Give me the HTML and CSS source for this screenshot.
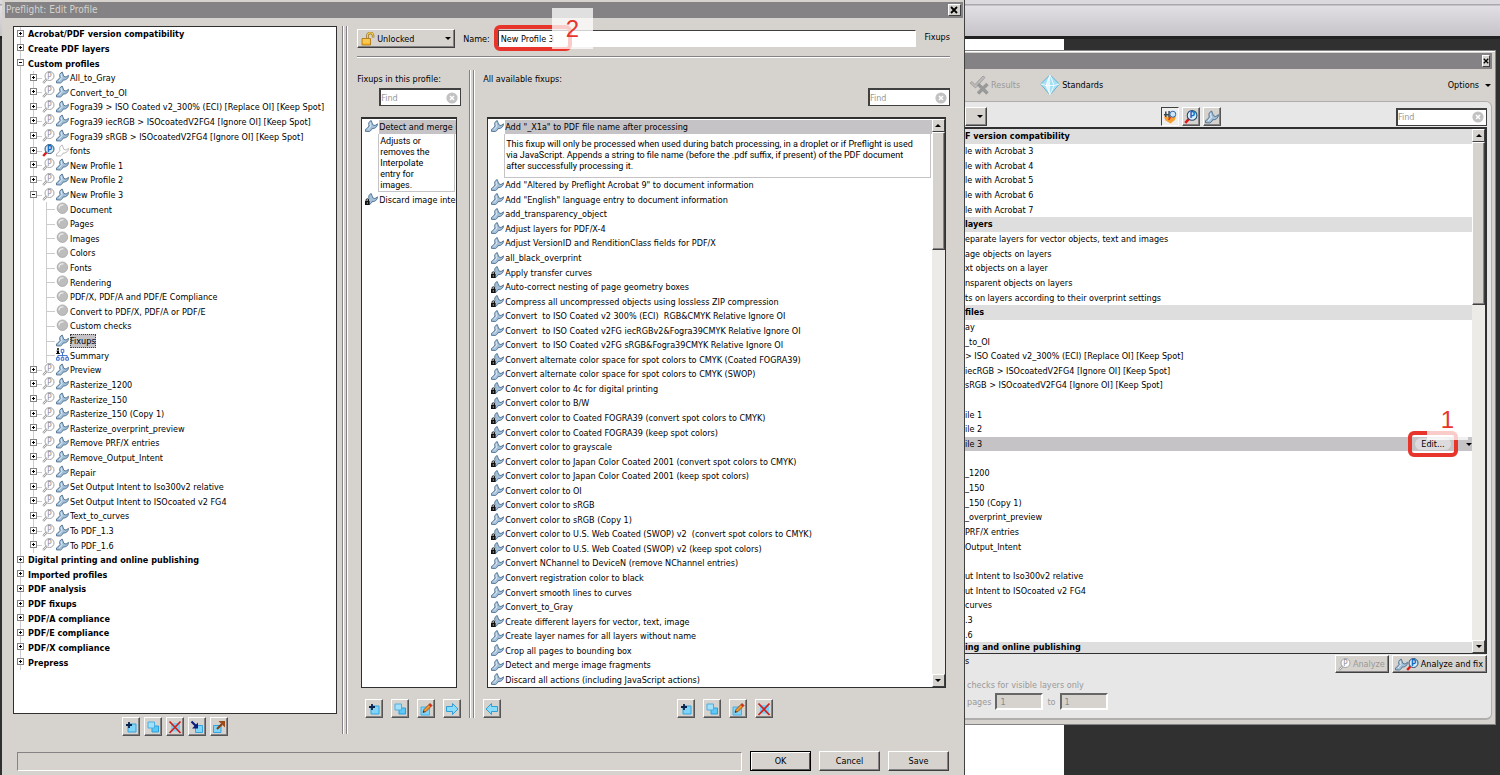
FILE: index.html
```
<!DOCTYPE html>
<html lang="en">

<head>
    <meta charset="utf-8">
    <title>Preflight: Edit Profile</title>
    <link rel="stylesheet" href="styles.css">
</head>

<body>
    <!-- Icon set -->
    <svg class="sprite" aria-hidden="true">
        <symbol id="wrench" viewBox="0 0 13 12">
            <path d="M6.200.5C3.600 1.500 3.200 4 4 6L1.800 8.600.5 9.400v2l4 .1 2.100-1.700.4-1.200c3 .2 5.500-1.600 5.500-4.800L10 5.600 7.800 4.800 7 2.600z" fill="#a3c0d8" stroke="#4f7190" stroke-width=".9" />
            <path d="M5.200 2.600c-.2 1.400.2 2.600.8 3.400L3 9.600" fill="none" stroke="#dcebf6" />
        </symbol>
        <symbol id="wrench-off" viewBox="0 0 13 12">
            <path d="M6.200.5C3.600 1.500 3.200 4 4 6L1.800 8.600.5 9.400v2l4 .1 2.100-1.700.4-1.200c3 .2 5.500-1.600 5.500-4.800L10 5.600 7.800 4.800 7 2.600z" fill="#fff" stroke="#aaa" stroke-width=".8" />
        </symbol>
        <symbol id="wrench-lock" viewBox="0 0 13 12">
            <path d="M6.200.5C3.600 1.500 3.200 4 4 6L1.800 8.600.5 9.400v2l4 .1 2.100-1.700.4-1.200c3 .2 5.500-1.600 5.500-4.800L10 5.600 7.800 4.800 7 2.600z" fill="#a3c0d8" stroke="#4f7190" stroke-width=".9" />
            <path d="M0 8h4.600v4H0z" fill="#111" />
            <path d="M1.100 8V7a1.200 1.200 0 0 1 2.400 0v1" fill="none" stroke="#111" />
            <path d="M1.800 9.500h1v1h-1z" fill="#fff" />
        </symbol>
        <symbol id="mag-off" viewBox="0 0 13 13">
            <path d="M4.800 8 1.200 12" stroke="#999" stroke-width="2.200" />
            <path d="M4.600 8.200 1.400 11.800" stroke="#f2f2f2" stroke-width=".9" />
            <circle cx="7.500" cy="5" r="4.500" fill="#fff" stroke="#999" stroke-width=".9" />
            <text x="5.200" y="7.800" class="mag-p" fill="#8c8c8c">P</text>
        </symbol>
        <symbol id="mag" viewBox="0 0 13 13">
            <path d="M4.800 8 1.200 12" stroke="#e01818" stroke-width="2.400" />
            <circle cx="7.500" cy="5" r="4.500" fill="#d8ecfa" stroke="#27496b" />
            <text x="5" y="7.800" class="mag-p mag-bold" fill="#0a6cc4">P</text>
        </symbol>
        <symbol id="dot" viewBox="0 0 13 13">
            <circle cx="6.400" cy="6.200" r="5.300" fill="#bdbdbd" stroke="#999" stroke-width=".6" />
            <path d="M3 6.500A3.400 3.400 0 0 1 7.500 3" fill="none" stroke="#eee" stroke-width="1.200" />
        </symbol>
        <symbol id="summary" viewBox="0 0 13 13">
            <path d="M1 .2h2v1.600H1zM.6 2.600H3V5h.8v1H.2V5H1V3.600H.6z" fill="#000" />
            <path d="M6.500 5v3.600M1.800 10V7.600h9.400V10" fill="none" stroke="#3a6cc8" />
            <path d="M5.200 1.400h2.600v3H5.200zM.6 9.600h2.600v2.600H.6zM5.200 9.600h2.600v2.600H5.200zM9.800 9.600h2.600v2.600H9.800z" fill="#fff" stroke="#3a6cc8" />
        </symbol>
        <symbol id="add" viewBox="0 0 14 14">
            <path d="M4 4h8v8H4z" fill="#7fd4f8" stroke="#35a4dc" />
            <path d="M5 2v6M2 5h6" stroke="#0a2450" stroke-width="1.800" />
        </symbol>
        <symbol id="copy" viewBox="0 0 14 14">
            <path d="M6 6h6.500v6H6z" fill="#5cc8f8" stroke="#2b9fda" />
            <path d="M2 2h6.500v6H2z" fill="#a5e0fb" stroke="#48b0e4" />
        </symbol>
        <symbol id="delete" viewBox="0 0 14 14">
            <path d="M3 3h9v8.500H3z" fill="#79d0f7" />
            <path d="M1.500 1.500 12.500 13M12.500 1.500 1.500 13" stroke="#d3201c" stroke-width="1.800" />
        </symbol>
        <symbol id="import" viewBox="0 0 14 14">
            <path d="M5.500 5.500h7v7h-7z" fill="#7fd4f8" stroke="#35a4dc" />
            <path d="M1.500 1.500 6 6" stroke="#101c7c" stroke-width="2.200" />
            <path d="M8 2.500V8.500H2z" fill="#101c7c" />
        </symbol>
        <symbol id="export" viewBox="0 0 14 14">
            <path d="M1.500 5.500h7.500v7H1.500z" fill="#7fd4f8" stroke="#35a4dc" />
            <path d="M5 9 10 4" stroke="#8a3e10" stroke-width="2.200" />
            <path d="M6.500 1H13v6.500z" fill="#9c4a18" />
        </symbol>
        <symbol id="pencil" viewBox="0 0 14 14">
            <path d="M2 5h8.500v8H2z" fill="#7fd4f8" stroke="#45b2e6" />
            <path d="M4 10.500 5 7.500l6-6 2 2-6 6z" fill="#f29a2a" stroke="#8a3a12" stroke-width=".8" />
            <path d="m11 1.500 2 2-1.400 1.400-2-2z" fill="#d4281c" />
            <path d="m4 10.500.6-1.800L5.800 9.900z" fill="#222" />
        </symbol>
        <symbol id="arrow-right" viewBox="0 0 14 14">
            <path d="M1.500 4.500h6v-3L13 7l-5.500 5.500v-3h-6z" fill="#8bdcfb" stroke="#2f9ed8" />
        </symbol>
        <symbol id="arrow-left" viewBox="0 0 14 14">
            <path d="M12.500 4.500h-6v-3L1 7l5.500 5.500v-3h6z" fill="#8bdcfb" stroke="#2f9ed8" />
        </symbol>
        <symbol id="clear" viewBox="0 0 12 12">
            <circle cx="6" cy="6" r="5.600" fill="#c2c2c2" />
            <path d="m4 4 4 4M8 4 4 8" stroke="#fff" stroke-width="1.500" />
        </symbol>
        <symbol id="cross" viewBox="0 0 8 8">
            <path d="m1 1 6 6M7 1 1 7" stroke="#000" stroke-width="1.800" />
        </symbol>
        <symbol id="padlock" viewBox="0 0 14 14">
            <path d="M6.500 6.500V4a2.700 2.700 0 0 1 5.600-.5V5.500" fill="none" stroke="#8a6410" stroke-width="2.400" />
            <path d="M6.500 6.500V4a2.700 2.700 0 0 1 5.600-.5V5.500" fill="none" stroke="#f3cf58" stroke-width="1.200" />
            <path d="M1 6.500h8.500v6.500H1z" fill="#f7b92c" stroke="#a8700c" stroke-width=".8" />
            <path d="M1.800 8h7M1.800 10h7" stroke="#fbe08a" stroke-width=".8" />
        </symbol>
        <symbol id="results" viewBox="0 0 20 20">
            <path d="m1 8 2-1.500L6 9.500 14 1l2 1.500L6.500 13z" fill="#bbb" stroke="#999" stroke-width=".8" />
            <path d="m9 9 9.500 9.500M18.500 9 9 18.500" stroke="#999" stroke-width="3.400" />
        </symbol>
        <symbol id="gem" viewBox="0 0 20 22">
            <path d="M10 .8 19.400 10 10 21 .6 10z" fill="#a6e0f5" stroke="#5aa6c8" stroke-width=".8" />
            <path d="M10 .8 6 11l4 10z" fill="#e0f6fe" />
            <path d="M.6 10 6 11.500 14 11.500 19.400 10M10 .8 6 11.500 10 21 14 11.500z" fill="none" stroke="#fff" stroke-width=".8" />
        </symbol>
        <symbol id="show-all" viewBox="0 0 15 15">
            <path d="M1 7h13l-1.500 4L8 14.500 2.500 11z" fill="#f6a030" />
            <path d="M3 1.500v6M6.500 1v7M1 5h6" stroke="#3c4650" stroke-width="1.600" />
            <circle cx="10.500" cy="4.500" r="3.200" fill="#cfe6f8" stroke="#27609c" />
            <path d="m8 7.500-2 3" stroke="#e02818" stroke-width="1.600" />
        </symbol>
    </svg>

    <div class="desktop">
        <div class="app-toolbar"></div>
        <div class="document"></div>

        <!-- Preflight window, behind -->
        <section class="preflight">
            <header class="titlebar titlebar-back">
                <button class="close" aria-label="Close Preflight"><svg><use href="#cross" /></svg></button>
            </header>
            <div class="tabs">
                <button class="tab disabled" disabled><svg class="results"><use href="#results" /></svg>Results</button>
                <button class="tab"><svg class="gem"><use href="#gem" /></svg>Standards</button>
                <button class="options">Options <i class="caret"></i></button>
            </div>
            <div class="panel">
                <div class="filter-bar">
                    <div class="select library"><select aria-label="Library"></select><i class="caret"></i></div>
                    <div class="filters">
                        <button class="tool pressed" aria-label="Show all"><svg><use href="#show-all" /></svg></button>
                        <button class="tool" aria-label="Show checks"><svg><use href="#mag" /></svg></button>
                        <button class="tool" aria-label="Show fixups"><svg><use href="#wrench" /></svg></button>
                    </div>
                    <div class="find find-wide">
                        <input type="text" placeholder="Find" aria-label="Find profile">
                        <svg><use href="#clear" /></svg>
                    </div>
                </div>

                <div class="listbox profiles">
                    <ul class="rows">
                        <li class="group">F version compatibility</li>
                        <li>le with Acrobat 3</li>
                        <li>le with Acrobat 4</li>
                        <li>le with Acrobat 5</li>
                        <li>le with Acrobat 6</li>
                        <li>le with Acrobat 7</li>
                        <li class="group">layers</li>
                        <li>eparate layers for vector objects, text and images</li>
                        <li>age objects on layers</li>
                        <li>xt objects on a layer</li>
                        <li>nsparent objects on layers</li>
                        <li>ts on layers according to their overprint settings</li>
                        <li class="group">files</li>
                        <li>ay</li>
                        <li>_to_OI</li>
                        <li>&gt; ISO Coated v2_300% (ECI) [Replace OI] [Keep Spot]</li>
                        <li>iecRGB &gt; ISOcoatedV2FG4 [Ignore OI] [Keep Spot]</li>
                        <li>sRGB &gt; ISOcoatedV2FG4 [Ignore OI] [Keep Spot]</li>
                        <li></li>
                        <li>ile 1</li>
                        <li>ile 2</li>
                        <li class="selected">
                            ile 3
                            <span class="edit-wrap">
                                <button class="edit">Edit...</button>
                                <span class="mark mark-edit"></span>
                                <span class="step step-edit">1</span>
                            </span>
                            <i class="caret"></i>
                        </li>
                        <li></li>
                        <li>_1200</li>
                        <li>_150</li>
                        <li>_150 (Copy 1)</li>
                        <li>_overprint_preview</li>
                        <li>PRF/X entries</li>
                        <li>Output_Intent</li>
                        <li></li>
                        <li>ut Intent to Iso300v2 relative</li>
                        <li>ut Intent to ISOcoated v2 FG4</li>
                        <li>curves</li>
                        <li>.3</li>
                        <li>.6</li>
                        <li class="group cut">ing and online publishing</li>
                    </ul>
                    <div class="scrollbar">
                        <button class="arrow up" aria-label="Scroll up"></button>
                        <div class="thumb thumb-profiles"></div>
                        <button class="arrow down" aria-label="Scroll down"></button>
                    </div>
                </div>

                <div class="actions">
                    <span class="tail">s</span>
                    <button class="btn action" disabled><svg><use href="#mag-off" /></svg>Analyze</button>
                    <button class="btn action"><svg><use href="#wrench" /></svg><svg><use href="#mag" /></svg>Analyze and fix</button>
                </div>
                <div class="limits">checks for visible layers only</div>
                <div class="limits">
                    <label for="page-from">pages</label>
                    <input type="text" id="page-from" value="1" disabled>
                    <label for="page-to">to</label>
                    <input type="text" id="page-to" value="1" disabled>
                </div>
            </div>
        </section>

        <!-- Edit Profile dialog -->
        <section class="dialog">
            <header class="titlebar">
                <span class="title">Preflight: Edit Profile</span>
                <button class="close" aria-label="Close"><svg><use href="#cross" /></svg></button>
            </header>

            <div class="dialog-body">
                <div class="tree-col">
                    <ul class="tree">
                        <li class="cat"><i class="exp"></i>Acrobat/PDF version compatibility</li>
                        <li class="cat"><i class="exp"></i>Create PDF layers</li>
                        <li class="cat"><i class="exp expanded"></i>Custom profiles</li>
                        <li class="profile"><i class="exp"></i><svg><use href="#mag-off" /></svg><svg><use href="#wrench" /></svg>All_to_Gray</li>
                        <li class="profile"><i class="exp"></i><svg><use href="#mag-off" /></svg><svg><use href="#wrench" /></svg>Convert_to_OI</li>
                        <li class="profile"><i class="exp"></i><svg><use href="#mag-off" /></svg><svg><use href="#wrench" /></svg>Fogra39 &gt; ISO Coated v2_300% (ECI) [Replace OI] [Keep Spot]</li>
                        <li class="profile"><i class="exp"></i><svg><use href="#mag-off" /></svg><svg><use href="#wrench" /></svg>Fogra39 iecRGB &gt; ISOcoatedV2FG4 [Ignore OI] [Keep Spot]</li>
                        <li class="profile"><i class="exp"></i><svg><use href="#mag-off" /></svg><svg><use href="#wrench" /></svg>Fogra39 sRGB &gt; ISOcoatedV2FG4 [Ignore OI] [Keep Spot]</li>
                        <li class="profile"><i class="exp"></i><svg><use href="#mag" /></svg><svg><use href="#wrench-off" /></svg>fonts</li>
                        <li class="profile"><i class="exp"></i><svg><use href="#mag-off" /></svg><svg><use href="#wrench" /></svg>New Profile 1</li>
                        <li class="profile"><i class="exp"></i><svg><use href="#mag-off" /></svg><svg><use href="#wrench" /></svg>New Profile 2</li>
                        <li class="profile"><i class="exp expanded"></i><svg><use href="#mag-off" /></svg><svg><use href="#wrench" /></svg>New Profile 3</li>
                        <li class="part"><svg><use href="#dot" /></svg>Document</li>
                        <li class="part"><svg><use href="#dot" /></svg>Pages</li>
                        <li class="part"><svg><use href="#dot" /></svg>Images</li>
                        <li class="part"><svg><use href="#dot" /></svg>Colors</li>
                        <li class="part"><svg><use href="#dot" /></svg>Fonts</li>
                        <li class="part"><svg><use href="#dot" /></svg>Rendering</li>
                        <li class="part"><svg><use href="#dot" /></svg>PDF/X, PDF/A and PDF/E Compliance</li>
                        <li class="part"><svg><use href="#dot" /></svg>Convert to PDF/X, PDF/A or PDF/E</li>
                        <li class="part"><svg><use href="#dot" /></svg>Custom checks</li>
                        <li class="part"><svg><use href="#wrench" /></svg><span class="current">Fixups</span></li>
                        <li class="part"><svg><use href="#summary" /></svg>Summary</li>
                        <li class="profile"><i class="exp"></i><svg><use href="#mag-off" /></svg><svg><use href="#wrench" /></svg>Preview</li>
                        <li class="profile"><i class="exp"></i><svg><use href="#mag-off" /></svg><svg><use href="#wrench" /></svg>Rasterize_1200</li>
                        <li class="profile"><i class="exp"></i><svg><use href="#mag-off" /></svg><svg><use href="#wrench" /></svg>Rasterize_150</li>
                        <li class="profile"><i class="exp"></i><svg><use href="#mag-off" /></svg><svg><use href="#wrench" /></svg>Rasterize_150 (Copy 1)</li>
                        <li class="profile"><i class="exp"></i><svg><use href="#mag-off" /></svg><svg><use href="#wrench" /></svg>Rasterize_overprint_preview</li>
                        <li class="profile"><i class="exp"></i><svg><use href="#mag-off" /></svg><svg><use href="#wrench" /></svg>Remove PRF/X entries</li>
                        <li class="profile"><i class="exp"></i><svg><use href="#mag-off" /></svg><svg><use href="#wrench" /></svg>Remove_Output_Intent</li>
                        <li class="profile"><i class="exp"></i><svg><use href="#mag-off" /></svg><svg><use href="#wrench" /></svg>Repair</li>
                        <li class="profile"><i class="exp"></i><svg><use href="#mag-off" /></svg><svg><use href="#wrench" /></svg>Set Output Intent to Iso300v2 relative</li>
                        <li class="profile"><i class="exp"></i><svg><use href="#mag-off" /></svg><svg><use href="#wrench" /></svg>Set Output Intent to ISOcoated v2 FG4</li>
                        <li class="profile"><i class="exp"></i><svg><use href="#mag-off" /></svg><svg><use href="#wrench" /></svg>Text_to_curves</li>
                        <li class="profile"><i class="exp"></i><svg><use href="#mag-off" /></svg><svg><use href="#wrench" /></svg>To PDF_1.3</li>
                        <li class="profile"><i class="exp"></i><svg><use href="#mag-off" /></svg><svg><use href="#wrench" /></svg>To PDF_1.6</li>
                        <li class="cat"><i class="exp"></i>Digital printing and online publishing</li>
                        <li class="cat"><i class="exp"></i>Imported profiles</li>
                        <li class="cat"><i class="exp"></i>PDF analysis</li>
                        <li class="cat"><i class="exp"></i>PDF fixups</li>
                        <li class="cat"><i class="exp"></i>PDF/A compliance</li>
                        <li class="cat"><i class="exp"></i>PDF/E compliance</li>
                        <li class="cat"><i class="exp"></i>PDF/X compliance</li>
                        <li class="cat"><i class="exp"></i>Prepress</li>
                    </ul>
                    <div class="tree-tools">
                        <button class="tool" aria-label="New profile"><svg><use href="#add" /></svg></button>
                        <button class="tool" aria-label="Duplicate profile"><svg><use href="#copy" /></svg></button>
                        <button class="tool" aria-label="Delete profile"><svg><use href="#delete" /></svg></button>
                        <button class="tool" aria-label="Import profile"><svg><use href="#import" /></svg></button>
                        <button class="tool" aria-label="Export profile"><svg><use href="#export" /></svg></button>
                    </div>
                </div>

                <div class="divider"></div>

                <div class="edit-col">
                    <div class="name-row">
                        <div class="select lock-state">
                            <svg><use href="#padlock" /></svg>
                            <select aria-label="Lock state">
                                <option>Unlocked</option>
                            </select>
                            <i class="caret"></i>
                        </div>
                        <label for="profile-name">Name:</label>
                        <div class="name-wrap">
                            <input type="text" id="profile-name" value="New Profile 3">
                            <span class="mark mark-name"></span>
                            <span class="step step-name">2</span>
                        </div>
                        <span class="page-name">Fixups</span>
                    </div>

                    <div class="fixups">
                        <div class="used">
                            <label for="find-used">Fixups in this profile:</label>
                            <div class="find">
                                <input type="text" id="find-used" placeholder="Find">
                                <svg><use href="#clear" /></svg>
                            </div>
                            <div class="listbox">
                                <ul class="rows loose">
                                    <li class="fix open"><svg><use href="#wrench" /></svg><span>Detect and merge image fragments</span></li>
                                    <li class="about about-used">Adjusts or removes the Interpolate entry for images.</li>
                                    <li class="fix"><svg><use href="#wrench-lock" /></svg><span>Discard image interpolation</span></li>
                                </ul>
                            </div>
                            <div class="fix-tools">
                                <button class="tool" aria-label="New fixup"><svg><use href="#add" /></svg></button>
                                <button class="tool" aria-label="Duplicate fixup"><svg><use href="#copy" /></svg></button>
                                <button class="tool" aria-label="Edit fixup"><svg><use href="#pencil" /></svg></button>
                                <button class="tool" aria-label="Remove from profile"><svg><use href="#arrow-right" /></svg></button>
                            </div>
                        </div>

                        <div class="divider"></div>

                        <div class="available">
                            <label for="find-available">All available fixups:</label>
                            <div class="find">
                                <input type="text" id="find-available" placeholder="Find">
                                <svg><use href="#clear" /></svg>
                            </div>
                            <div class="listbox">
                                <ul class="rows">
                                    <li class="fix open"><svg><use href="#wrench" /></svg><span>Add "_X1a" to PDF file name after processing</span></li>
                                    <li class="about">This fixup will only be processed when used during batch processing, in a droplet or if Preflight is used via JavaScript. Appends a string to file name (before the .pdf suffix, if present) of the PDF document after successfully processing it.</li>
                                    <li class="fix"><svg><use href="#wrench" /></svg><span>Add "Altered by Preflight Acrobat 9" to document information</span></li>
                                    <li class="fix"><svg><use href="#wrench" /></svg><span>Add "English" language entry to document information</span></li>
                                    <li class="fix"><svg><use href="#wrench" /></svg><span>add_transparency_object</span></li>
                                    <li class="fix"><svg><use href="#wrench" /></svg><span>Adjust layers for PDF/X-4</span></li>
                                    <li class="fix"><svg><use href="#wrench" /></svg><span>Adjust VersionID and RenditionClass fields for PDF/X</span></li>
                                    <li class="fix"><svg><use href="#wrench" /></svg><span>all_black_overprint</span></li>
                                    <li class="fix"><svg><use href="#wrench-lock" /></svg><span>Apply transfer curves</span></li>
                                    <li class="fix"><svg><use href="#wrench-lock" /></svg><span>Auto-correct nesting of page geometry boxes</span></li>
                                    <li class="fix"><svg><use href="#wrench-lock" /></svg><span>Compress all uncompressed objects using lossless ZIP compression</span></li>
                                    <li class="fix"><svg><use href="#wrench" /></svg><span>Convert&nbsp; to ISO Coated v2 300% (ECI)&nbsp; RGB&amp;CMYK Relative Ignore OI</span></li>
                                    <li class="fix"><svg><use href="#wrench" /></svg><span>Convert&nbsp; to ISO Coated v2FG iecRGBv2&amp;Fogra39CMYK Relative Ignore OI</span></li>
                                    <li class="fix"><svg><use href="#wrench" /></svg><span>Convert&nbsp; to ISO Coated v2FG sRGB&amp;Fogra39CMYK Relative Ignore OI</span></li>
                                    <li class="fix"><svg><use href="#wrench-lock" /></svg><span>Convert alternate color space for spot colors to CMYK (Coated FOGRA39)</span></li>
                                    <li class="fix"><svg><use href="#wrench" /></svg><span>Convert alternate color space for spot colors to CMYK (SWOP)</span></li>
                                    <li class="fix"><svg><use href="#wrench-lock" /></svg><span>Convert color to 4c for digital printing</span></li>
                                    <li class="fix"><svg><use href="#wrench-lock" /></svg><span>Convert color to B/W</span></li>
                                    <li class="fix"><svg><use href="#wrench-lock" /></svg><span>Convert color to Coated FOGRA39 (convert spot colors to CMYK)</span></li>
                                    <li class="fix"><svg><use href="#wrench-lock" /></svg><span>Convert color to Coated FOGRA39 (keep spot colors)</span></li>
                                    <li class="fix"><svg><use href="#wrench" /></svg><span>Convert color to grayscale</span></li>
                                    <li class="fix"><svg><use href="#wrench-lock" /></svg><span>Convert color to Japan Color Coated 2001 (convert spot colors to CMYK)</span></li>
                                    <li class="fix"><svg><use href="#wrench-lock" /></svg><span>Convert color to Japan Color Coated 2001 (keep spot colors)</span></li>
                                    <li class="fix"><svg><use href="#wrench" /></svg><span>Convert color to OI</span></li>
                                    <li class="fix"><svg><use href="#wrench-lock" /></svg><span>Convert color to sRGB</span></li>
                                    <li class="fix"><svg><use href="#wrench" /></svg><span>Convert color to sRGB (Copy 1)</span></li>
                                    <li class="fix"><svg><use href="#wrench-lock" /></svg><span>Convert color to U.S. Web Coated (SWOP) v2&nbsp; (convert spot colors to CMYK)</span></li>
                                    <li class="fix"><svg><use href="#wrench-lock" /></svg><span>Convert color to U.S. Web Coated (SWOP) v2 (keep spot colors)</span></li>
                                    <li class="fix"><svg><use href="#wrench" /></svg><span>Convert NChannel to DeviceN (remove NChannel entries)</span></li>
                                    <li class="fix"><svg><use href="#wrench" /></svg><span>Convert registration color to black</span></li>
                                    <li class="fix"><svg><use href="#wrench" /></svg><span>Convert smooth lines to curves</span></li>
                                    <li class="fix"><svg><use href="#wrench" /></svg><span>Convert_to_Gray</span></li>
                                    <li class="fix"><svg><use href="#wrench-lock" /></svg><span>Create different layers for vector, text, image</span></li>
                                    <li class="fix"><svg><use href="#wrench" /></svg><span>Create layer names for all layers without name</span></li>
                                    <li class="fix"><svg><use href="#wrench" /></svg><span>Crop all pages to bounding box</span></li>
                                    <li class="fix"><svg><use href="#wrench" /></svg><span>Detect and merge image fragments</span></li>
                                    <li class="fix"><svg><use href="#wrench" /></svg><span>Discard all actions (including JavaScript actions)</span></li>
                                </ul>
                                <div class="scrollbar">
                                    <button class="arrow up" aria-label="Scroll up"></button>
                                    <div class="thumb thumb-fixups"></div>
                                    <button class="arrow down" aria-label="Scroll down"></button>
                                </div>
                            </div>
                            <div class="fix-tools">
                                <button class="tool" aria-label="Add to profile"><svg><use href="#arrow-left" /></svg></button>
                                <div class="fix-tools-mid">
                                    <button class="tool" aria-label="New fixup"><svg><use href="#add" /></svg></button>
                                    <button class="tool" aria-label="Duplicate fixup"><svg><use href="#copy" /></svg></button>
                                    <button class="tool" aria-label="Edit fixup"><svg><use href="#pencil" /></svg></button>
                                    <button class="tool" aria-label="Delete fixup"><svg><use href="#delete" /></svg></button>
                                </div>
                            </div>
                        </div>
                    </div>
                </div>
            </div>

            <footer class="dialog-foot">
                <div class="status"></div>
                <button class="btn default">OK</button>
                <button class="btn">Cancel</button>
                <button class="btn">Save</button>
            </footer>
        </section>
    </div>
</body>

</html>
```
FILE: styles.css
```
* {
    box-sizing: border-box;
}

body {
    margin: 0;
    font-family: "DejaVu Sans Condensed", "DejaVu Sans", sans-serif;
    font-size: 9px;
    line-height: 14px;
    color: #000;
}

button,
input,
select {
    font: inherit;
    color: inherit;
    margin: 0;
    padding: 0;
}

ul {
    list-style: none;
    margin: 0;
    padding: 0;
}

.sprite {
    position: absolute;
    width: 0;
    height: 0;
}

.mag-p {
    font-size: 8px;
}

.mag-bold {
    font-weight: bold;
}

/* Desktop */
.desktop {
    position: relative;
    height: 100vh;
    min-height: 600px;
    overflow: hidden;
    display: flex;
    flex-direction: column;
    background: #303030;
}

.app-toolbar {
    height: 39px;
    border-bottom: 3px solid #222;
    background: linear-gradient(#dcd9de 4px, #a9a7ac 4px, #a9a7ac 5px, #e2dfe4 6px, #c6c3c9);
}

.document {
    flex: 1;
    width: 70.9%;
    background: linear-gradient(90deg, #303030 3px, #fff 3px);
}

/* Shared widgets */
.titlebar {
    display: flex;
    align-items: center;
    justify-content: space-between;
    height: 16px;
    padding: 0 2px 0 1px;
    background: #848284;
    color: #d6d3ce;
}

.title {
    font-size: 10px;
}

.close {
    display: flex;
    align-items: center;
    justify-content: center;
    width: 13px;
    height: 12px;
    border: 1px solid;
    border-color: #fff #404040 #404040 #fff;
    background: #d6d3ce;
}

.close svg {
    width: 8px;
    height: 8px;
}

.tool {
    display: flex;
    align-items: center;
    justify-content: center;
    width: 18px;
    height: 19px;
    border: 1px solid;
    border-color: #fff #555 #555 #fff;
    background: #d6d3ce;
    box-shadow: inset -1px -1px #848284;
}

.tool svg {
    width: 14px;
    height: 14px;
}

.pressed {
    border-color: #404040 #fff #fff #404040;
    background: #eee;
    box-shadow: none;
}

.btn {
    width: 61px;
    height: 20px;
    border: 1px solid;
    border-color: #fff #404040 #404040 #fff;
    background: #d6d3ce;
    box-shadow: inset -1px -1px #848284;
}

.default {
    border-color: #000;
    box-shadow: inset 1px 1px #fff, inset -1px -1px #555;
}

.caret {
    border: 3px solid transparent;
    border-top-color: #000;
    border-bottom: 0;
}

.select {
    display: flex;
    align-items: center;
    height: 19px;
    padding: 0 3px;
    border: 1px solid;
    border-color: #fff #404040 #404040 #fff;
    background: #d6d3ce;
    box-shadow: inset -1px -1px #848284;
}

.select select {
    flex: 1;
    min-width: 0;
    appearance: none;
    border: 0;
    background: none;
}

.find {
    display: flex;
    align-items: center;
    width: 82px;
    height: 18px;
    padding: 0 2px 0 0;
    border: 2px solid #404040;
    border-right-width: 1px;
    border-bottom-width: 1px;
    background: #fff;
}

.find input {
    flex: 1;
    min-width: 0;
    border: 0;
    background: none;
}

.find input::placeholder {
    color: #999;
    opacity: 1;
}

.find svg {
    width: 12px;
    height: 12px;
}

.listbox {
    display: flex;
    flex: 1;
    min-height: 0;
    border: 1px solid #303030;
    border-top-width: 2px;
    background: #fff;
}

.rows {
    display: flex;
    flex-direction: column;
    flex: 1;
    min-width: 0;
    min-height: 0;
}

.rows li {
    display: flex;
    align-items: center;
    flex: 1 1 0;
    min-height: 0;
    white-space: nowrap;
}

.scrollbar {
    display: flex;
    flex-direction: column;
    width: 13px;
    background: #ecebe8;
}

.arrow {
    display: flex;
    align-items: center;
    justify-content: center;
    height: 13px;
    border: 1px solid;
    border-color: #fff #404040 #404040 #fff;
    background: #d6d3ce;
}

.arrow::before {
    content: "";
    border: 3px solid transparent;
}

.up::before {
    border-bottom-color: #000;
    border-top: 0;
}

.down {
    margin-top: auto;
}

.down::before {
    border-top-color: #000;
    border-bottom: 0;
}

.thumb {
    border: 1px solid;
    border-color: #fff #404040 #404040 #fff;
    background: #d6d3ce;
    box-shadow: inset -1px -1px #848284;
}

.thumb-fixups {
    height: 118px;
}

.divider {
    width: 6px;
    border-right: 1px solid #fff;
    background: linear-gradient(90deg, #848284 1px, #fff 1px, #fff 2px, transparent 2px, transparent 4px, #848284 4px);
}

/* Numbered callouts */
.mark {
    position: absolute;
    border: 4px solid #e8352c;
    border-radius: 6px;
    pointer-events: none;
}

.step {
    position: absolute;
    width: 41px;
    height: 41px;
    background: rgba(255, 255, 255, 0.75);
    color: #e8352c;
    font-family: "Liberation Sans", Arial, sans-serif;
    font-size: 24px;
    line-height: 41px;
    text-align: center;
    pointer-events: none;
}

/* Preflight window */
.preflight {
    position: absolute;
    top: 50px;
    right: 4px;
    bottom: 50px;
    left: calc(64.2% + 2px);
    display: flex;
    flex-direction: column;
    padding: 2px 3px 4px 0;
    border: 1px solid #848284;
    border-left: 0;
    background: #d6d3ce;
    box-shadow: inset 0 1px #fff;
}

.titlebar-back {
    flex-direction: row-reverse;
}

.titlebar-back .close {
    width: 8px;
}

.titlebar-back .close svg {
    width: 6px;
    height: 6px;
}

.tabs {
    display: flex;
    align-items: center;
    gap: 20px;
    height: 32px;
    padding: 0 1px 0 4px;
}

.tab,
.options {
    display: flex;
    align-items: center;
    gap: 2px;
    border: 0;
    background: none;
}

.disabled {
    color: #999;
}

.results {
    width: 20px;
    height: 20px;
}

.gem {
    width: 20px;
    height: 22px;
}

.options {
    gap: 6px;
    margin-left: auto;
}

.panel {
    display: flex;
    flex-direction: column;
    flex: 1;
    min-height: 0;
    padding: 5px 4px 8px 0;
    border: 1px solid #b0aeac;
    border-left: 0;
    border-bottom-width: 2px;
    border-radius: 0 6px 6px 0;
    background: #e7e7e7;
}

.filter-bar {
    display: flex;
    align-items: center;
    justify-content: space-between;
    height: 19px;
    margin-bottom: 1px;
}

.library {
    width: 22px;
}

.filters {
    display: flex;
    gap: 3px;
}

.find-wide {
    width: 91px;
}

.profiles {
    border-left: 0;
    border-right-width: 2px;
}

.profiles .group {
    background: #dedede;
    font-weight: bold;
}

.profiles .cut {
    flex: 0 0 11px;
    overflow: hidden;
}

.profiles .selected {
    background: #c6c3c6;
}

.edit-wrap {
    position: relative;
    margin: 0 15px 0 auto;
}

.edit {
    display: block;
    width: 36px;
    height: 12px;
    border: 0;
    border-radius: 6px;
    background: #dddbdd;
    line-height: 12px;
}

.mark-edit {
    inset: -7px;
}

.step-edit {
    left: 12px;
    bottom: 10px;
}

.thumb-profiles {
    height: 163px;
}

.actions {
    display: flex;
    align-items: center;
    gap: 3px;
    height: 20px;
    margin-bottom: 2px;
}

.tail {
    margin: 0 auto 6px 0;
}

.action {
    display: flex;
    align-items: center;
    gap: 2px;
    width: auto;
    height: 18px;
    padding: 0 3px 0 2px;
}

.action svg {
    width: 13px;
    height: 13px;
}

.action svg + svg {
    margin-left: -4px;
}

.action:disabled {
    color: #999;
}

.limits {
    display: flex;
    align-items: center;
    gap: 4px;
    height: 17px;
    padding-left: 2px;
    color: #999;
}

.limits input {
    width: 48px;
    height: 17px;
    padding: 0 3px;
    border: 2px solid;
    border-color: #666 #fff #fff #666;
    background: #d6d3ce;
    color: #888;
}

/* Edit Profile dialog */
.dialog {
    position: absolute;
    top: 0;
    bottom: 0;
    left: 2px;
    display: flex;
    flex-direction: column;
    width: 64.2%;
    padding: 2px 1px 4px 3px;
    border-right: 1px solid #404040;
    background: #d6d3ce;
}

.dialog-body {
    display: flex;
    flex: 1;
    min-height: 0;
    gap: 5px;
    padding: 8px 13px 0 8px;
}

.tree-col {
    display: flex;
    flex-direction: column;
    flex: 0 0 34.6%;
    min-width: 0;
    margin-bottom: 7px;
}

.tree {
    display: flex;
    flex-direction: column;
    flex: 1;
    min-height: 0;
    padding-bottom: 43px;
    border: 1px solid #303030;
    background: #fff;
}

.tree li {
    display: flex;
    align-items: center;
    flex: 1 1 0;
    min-height: 0;
    white-space: nowrap;
}

.tree svg {
    flex: none;
    width: 13px;
    height: 13px;
    margin: 0 1px 2px 0;
}

/* Expander box: plus when closed, minus when expanded */
.exp {
    flex: none;
    width: 7px;
    height: 7px;
    margin: 0 4px 2px 0;
    border: 1px solid #848284;
    background:
        linear-gradient(#000, #000) center / 3px 1px no-repeat,
        linear-gradient(#000, #000) center / 1px 3px no-repeat,
        #fff;
}

.profile .exp {
    margin-right: 5px;
}

.expanded {
    background: linear-gradient(#000, #000) center / 3px 1px no-repeat, #fff;
}

.cat {
    padding-left: 3px;
    background: linear-gradient(#ccc, #ccc) 6px 0 / 1px 100% no-repeat;
    font-weight: bold;
}

.profile {
    padding-left: 16px;
    background:
        linear-gradient(#ccc, #ccc) 6px 0 / 1px 100% no-repeat,
        linear-gradient(#ccc, #ccc) 19px 0 / 1px 100% no-repeat,
        linear-gradient(#ccc, #ccc) 22px 50% / 6px 1px no-repeat;
}

.part {
    padding-left: 42px;
    background:
        linear-gradient(#ccc, #ccc) 6px 0 / 1px 100% no-repeat,
        linear-gradient(#ccc, #ccc) 19px 0 / 1px 100% no-repeat,
        linear-gradient(#ccc, #ccc) 32px 0 / 1px 100% no-repeat,
        linear-gradient(#ccc, #ccc) 32px 50% / 9px 1px no-repeat;
}

.current {
    outline: 1px dotted #404040;
    outline-offset: -1px;
    background: #c6c3c6;
}

.tree-tools {
    display: flex;
    justify-content: center;
    gap: 4px;
    margin-top: 3px;
}

.dialog-body > .divider {
    margin-bottom: 9px;
}

.edit-col {
    display: flex;
    flex-direction: column;
    flex: 1;
    min-width: 0;
    margin-left: 4px;
}

.name-row {
    display: flex;
    align-items: center;
    gap: 8px;
    height: 31px;
    padding-bottom: 5px;
    border-bottom: 1px solid #848284;
    box-shadow: 0 1px #fff;
}

.lock-state {
    gap: 2px;
    width: 98px;
}

.lock-state svg {
    width: 14px;
    height: 14px;
}

.name-wrap {
    position: relative;
    flex: 1;
}

.name-wrap input {
    display: block;
    width: 100%;
    height: 17px;
    padding: 0 2px;
    border: 1px solid;
    border-color: #404040 #fff #fff #404040;
    background: #fff;
}

.mark-name {
    top: -5px;
    left: -4px;
    width: 78px;
    height: 26px;
}

.step-name {
    top: -22px;
    left: 54px;
}

.page-name {
    padding-bottom: 4px;
}

.fixups {
    display: flex;
    flex: 1;
    min-height: 0;
    gap: 8px;
    padding: 13px 0 25px;
}

.used,
.available {
    display: flex;
    flex-direction: column;
    min-width: 0;
}

.used {
    width: 104px;
}

.available {
    flex: 1;
}

.used > label,
.available > label {
    height: 18px;
    line-height: 18px;
}

.fixups .find {
    align-self: flex-end;
    margin-bottom: 11px;
}

.fixups .listbox {
    margin: 0 4px 11px 4px;
}

.fix svg {
    flex: none;
    width: 13px;
    height: 12px;
    margin: 0 1px 1px 3px;
}

.fix span {
    flex: 1;
    overflow: hidden;
}

.rows .open {
    flex: none;
    height: 15px;
}

.open span {
    background: #c6c3c6;
}

.rows .about {
    display: block;
    flex: none;
    height: 44px;
    margin: 0 1px 0 16px;
    padding: 5px 10px 0 1px;
    border: 1px solid #c6c3c6;
    border-top: 0;
    font-family: Roboto, sans-serif;
    line-height: 11px;
    white-space: normal;
}

.rows .about-used {
    height: 58px;
    padding: 2px 16px 0 1px;
}

.loose .fix {
    flex: none;
    height: 15px;
}

.fix-tools {
    display: flex;
    gap: 8px;
    padding-left: 8px;
}

.available .fix-tools {
    padding-left: 0;
}

.fix-tools-mid {
    display: flex;
    gap: 8px;
    margin-left: 168px;
}

.dialog-foot {
    display: flex;
    align-items: center;
    gap: 8px;
    padding: 8px 14px 0 12px;
}

.status {
    flex: 1;
    height: 19px;
    border: 1px solid;
    border-color: #848284 #fff #fff #848284;
}
```
